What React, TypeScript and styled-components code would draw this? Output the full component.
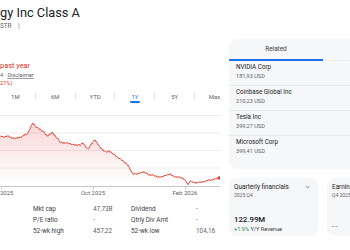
import React from 'react';
import styled, { createGlobalStyle } from 'styled-components';

const GlobalStyle = createGlobalStyle`
  html, body {
    margin: 0;
    padding: 0;
    background: #fff;
  }
  body {
    width: 350px;
    height: 250px;
    overflow: hidden;
    font-family: Roboto, 'Noto Sans', sans-serif;
    color: #202124;
  }
`;

const RED = '#d93025';
const GREY = '#5f6368';

const Page = styled.div`
  display: flex;
  width: 350px;
  height: 250px;
  overflow: hidden;
`;

const Main = styled.div`
  flex: 0 0 229px;
  display: flex;
  flex-direction: column;
  overflow: hidden;
`;

const Title = styled.h1`
  margin: 5px 0 0;
  font-size: 12.8px;
  line-height: 16px;
  font-weight: 400;
  color: #202124;
  white-space: nowrap;
`;

const Ticker = styled.div`
  display: flex;
  align-items: center;
  gap: 6px;
  margin-top: 1px;
  font-size: 6.4px;
  line-height: 8px;
  color: ${GREY};
`;

const PriceLine = styled.div`
  margin-top: 31px;
  font-size: 7.4px;
  line-height: 10px;
  color: ${RED};
  white-space: nowrap;
`;

const Note = styled.div<{ $red?: boolean }>`
  font-size: 5.6px;
  line-height: 8px;
  color: ${p => (p.$red ? RED : GREY)};
  white-space: nowrap;

  u {
    text-decoration-color: #9aa0a6;
    text-underline-offset: 1px;
  }
`;

const TabRow = styled.div`
  display: flex;
  width: 238px;
  height: 14px;
  margin: 3px 0 0 -4px;
`;

const Tab = styled.div<{ $active?: boolean }>`
  flex: 1;
  display: flex;
  flex-direction: column;
  align-items: center;
  padding-top: 3px;
  font-size: 6px;
  line-height: 8px;
  color: ${p => (p.$active ? '#1a73e8' : GREY)};

  &::after {
    content: '';
    width: 10px;
    height: 1.5px;
    border-radius: 1px;
    background: ${p => (p.$active ? '#1a73e8' : 'transparent')};
  }
`;

const TabDivider = styled.div`
  flex: 0 0 1px;
  height: 8px;
  margin-top: 2px;
  background: #e3e3e3;
`;

const ChartSvg = styled.svg`
  display: block;
  margin-top: 3px;
`;

const Stats = styled.div`
  display: grid;
  grid-template-columns: 60px 38px 65px auto;
  margin-top: 7px;
  padding-left: 33px;
  font-size: 6.4px;
  line-height: 11px;
`;

const StatLabel = styled.span`
  color: #3c4043;
`;

const StatValue = styled.span`
  color: ${GREY};
`;

const Side = styled.div`
  flex: 0 0 auto;
  display: flex;
  flex-direction: column;
  gap: 9px;
  padding-top: 39px;
`;

const Card = styled.section`
  width: 190px;
  background: #f6f7f8;
  border-radius: 8px;
  padding-bottom: 9px;
`;

const CardTabs = styled.div`
  display: flex;
  border-bottom: 1px solid #eceded;
`;

const CardTab = styled.div<{ $active?: boolean }>`
  flex: 0 0 94px;
  padding-top: 1px;
  text-align: center;
  font-size: 6.4px;
  line-height: 19px;
  color: #3c4043;
  border-bottom: 2px solid ${p => (p.$active ? '#1a73e8' : 'transparent')};
  margin-bottom: -1px;
`;

const Item = styled.div`
  padding: 2px 7px 4px;
  border-bottom: 1px solid #e9eaeb;

  &:last-child {
    border-bottom: none;
  }
`;

const ItemName = styled.div`
  font-size: 6.3px;
  line-height: 9px;
  color: #202124;
`;

const ItemPrice = styled.div`
  font-size: 5.6px;
  line-height: 9px;
  color: ${GREY};
`;

const MiniRow = styled.div`
  display: flex;
  gap: 9px;
`;

const MiniCard = styled.section`
  flex: 0 0 89px;
  height: 58px;
  box-sizing: border-box;
  padding: 5px 8px 0 5px;
  background: #f6f7f8;
  border-radius: 8px;
  white-space: nowrap;
`;

const MiniHead = styled.div`
  display: flex;
  align-items: center;
  justify-content: space-between;
  font-size: 6.4px;
  line-height: 8px;
  color: #202124;
`;

const MiniSub = styled.div`
  font-size: 5px;
  line-height: 8px;
  color: ${GREY};
`;

const MiniValue = styled.div<{ $gap: number }>`
  margin-top: ${p => p.$gap}px;
  font-size: 7.8px;
  line-height: 10px;
  font-weight: 500;
  color: #202124;
`;

const MiniFoot = styled.div<{ $gap?: number; $size?: number }>`
  margin-top: ${p => p.$gap ?? 0}px;
  font-size: ${p => p.$size ?? 5.6}px;
  line-height: 8px;
  color: #3c4043;

  b {
    font-weight: 400;
    color: #188038;
  }
`;

const key: [number, number][] = [
  [0, 139], [4, 140], [8, 139], [12, 141], [17, 141], [21, 140], [24, 138], [27, 137],
  [29, 134], [31, 129], [33, 126], [35, 129], [38, 131], [41, 133], [44, 135], [47, 139],
  [49, 138], [51, 136], [53, 136], [55, 139], [58, 142], [60, 145], [63, 146], [67, 146],
  [71, 147], [75, 148], [80, 148], [83, 146], [86, 150], [88, 152], [90, 149], [93, 145],
  [95, 143], [97, 146], [100, 150], [103, 153], [106, 155], [109, 154], [112, 156],
  [115, 158], [118, 161], [121, 162], [124, 165], [127, 167], [129, 170], [131, 174],
  [133, 177], [136, 177], [140, 176], [143, 175], [146, 176], [149, 178], [152, 178],
  [155, 179], [158, 180], [161, 180], [164, 179], [167, 178], [170, 177], [173, 179],
  [176, 180], [179, 180], [182, 181], [185, 183], [187, 186], [188, 188], [190, 184],
  [193, 185], [196, 186], [199, 185], [203, 185], [206, 184], [209, 183], [212, 183],
  [215, 182], [218, 181], [219, 181],
];

function linePoints() {
  const out: string[] = [];
  let seg = 0;
  for (let x = 0; x <= 219; x += 0.5) {
    while (seg < key.length - 2 && key[seg + 1][0] < x) seg++;
    const [x0, y0] = key[seg];
    const [x1, y1] = key[seg + 1];
    const t = x1 === x0 ? 0 : (x - x0) / (x1 - x0);
    const noise = x > 217 ? 0 : Math.sin(x * 7.31 + 1.7) * 0.45 + Math.sin(x * 2.13) * 0.35;
    out.push(`${x},${(y0 + (y1 - y0) * t + noise).toFixed(2)}`);
  }
  return out;
}

const PriceChart = () => {
  const pts = linePoints();
  const line = 'M' + pts.join(' L');
  const area = `${line} L219,189 L0,189 Z`;
  return (
    <ChartSvg width="220" height="90" viewBox="0 110 220 90">
      <defs>
        <linearGradient id="fade" x1="0" y1="124" x2="0" y2="186" gradientUnits="userSpaceOnUse">
          <stop offset="0" stopColor={RED} stopOpacity="0.2" />
          <stop offset="1" stopColor={RED} stopOpacity="0" />
        </linearGradient>
      </defs>
      {[118.5, 136, 153.5, 171].map(y => (
        <line key={y} x1="0" x2="220" y1={y} y2={y} stroke="#ececec" strokeWidth="1" />
      ))}
      <path d={area} fill="url(#fade)" />
      <path d={line} fill="none" stroke="#e0493c" strokeWidth="1" strokeLinejoin="round" />
      <circle cx="219" cy="181" r="1.7" fill="#e0493c" />
      <line x1="0" x2="220" y1="189.5" y2="189.5" stroke="#c4c7c9" strokeWidth="1" />
      {[1.5, 93.5, 185.5].map(x => (
        <line key={x} x1={x} x2={x} y1="189" y2="192.5" stroke="#c4c7c9" strokeWidth="1" />
      ))}
      <g fontSize="6" fill={GREY} textAnchor="middle" fontFamily="Roboto, sans-serif">
        <text x="1" y="198.3">Jun 2025</text>
        <text x="93" y="198.3">Oct 2025</text>
        <text x="185" y="198.3">Feb 2026</text>
      </g>
    </ChartSvg>
  );
};

const MoreDots = () => (
  <svg width="2" height="6" viewBox="0 0 2 6">
    <circle cx="1" cy="1" r="0.6" fill={GREY} />
    <circle cx="1" cy="3" r="0.6" fill={GREY} />
    <circle cx="1" cy="5" r="0.6" fill={GREY} />
  </svg>
);

const Chevron = () => (
  <svg width="5" height="4" viewBox="0 0 5 4">
    <polyline points="0.6,1 2.5,2.9 4.4,1" fill="none" stroke={GREY} strokeWidth="0.8" />
  </svg>
);

const tabs = ['1M', '6M', 'YTD', '1Y', '5Y', 'Max'];

const related = [
  { name: 'NVIDIA Corp', price: '181,93 USD' },
  { name: 'Coinbase Global Inc', price: '210,23 USD' },
  { name: 'Tesla Inc', price: '399,27 USD' },
  { name: 'Microsoft Corp', price: '399,41 USD' },
];

const stats = [
  ['Mkt cap', '47,73B', 'Dividend', '-'],
  ['P/E ratio', '-', 'Qtrly Div Amt', '-'],
  ['52-wk high', '457,22', '52-wk low', '104,16'],
];

export default function App() {
  return (
    <>
      <GlobalStyle />
      <Page>
        <Main>
          <Title>gy Inc Class A</Title>
          <Ticker>
            <span>STR</span>
            <MoreDots />
          </Ticker>
          <PriceLine>past year</PriceLine>
          <Note>4 · <u>Disclaimer</u></Note>
          <Note $red>21%)</Note>
          <TabRow>
            {tabs.map((t, i) => (
              <React.Fragment key={t}>
                {i > 0 && <TabDivider />}
                <Tab $active={t === '1Y'}>{t}</Tab>
              </React.Fragment>
            ))}
          </TabRow>
          <PriceChart />
          <Stats>
            {stats.map(row =>
              row.map((cell, i) =>
                i % 2 === 0 ? (
                  <StatLabel key={row[0] + i}>{cell}</StatLabel>
                ) : (
                  <StatValue key={row[0] + i}>{cell}</StatValue>
                ),
              ),
            )}
          </Stats>
        </Main>
        <Side>
          <Card>
            <CardTabs>
              <CardTab $active>Related</CardTab>
            </CardTabs>
            {related.map(r => (
              <Item key={r.name}>
                <ItemName>{r.name}</ItemName>
                <ItemPrice>{r.price}</ItemPrice>
              </Item>
            ))}
          </Card>
          <MiniRow>
            <MiniCard>
              <MiniHead>
                <span>Quarterly financials</span>
                <Chevron />
              </MiniHead>
              <MiniSub>2025 Q4</MiniSub>
              <MiniValue $gap={16}>122.99M</MiniValue>
              <MiniFoot>
                <b>+1.9%</b> Y/Y Revenue
              </MiniFoot>
            </MiniCard>
            <MiniCard>
              <MiniHead>
                <span>Earnings</span>
              </MiniHead>
              <MiniSub>Q4 2025</MiniSub>
              <MiniFoot $gap={24} $size={6.4}>- -</MiniFoot>
            </MiniCard>
          </MiniRow>
        </Side>
      </Page>
    </>
  );
}
